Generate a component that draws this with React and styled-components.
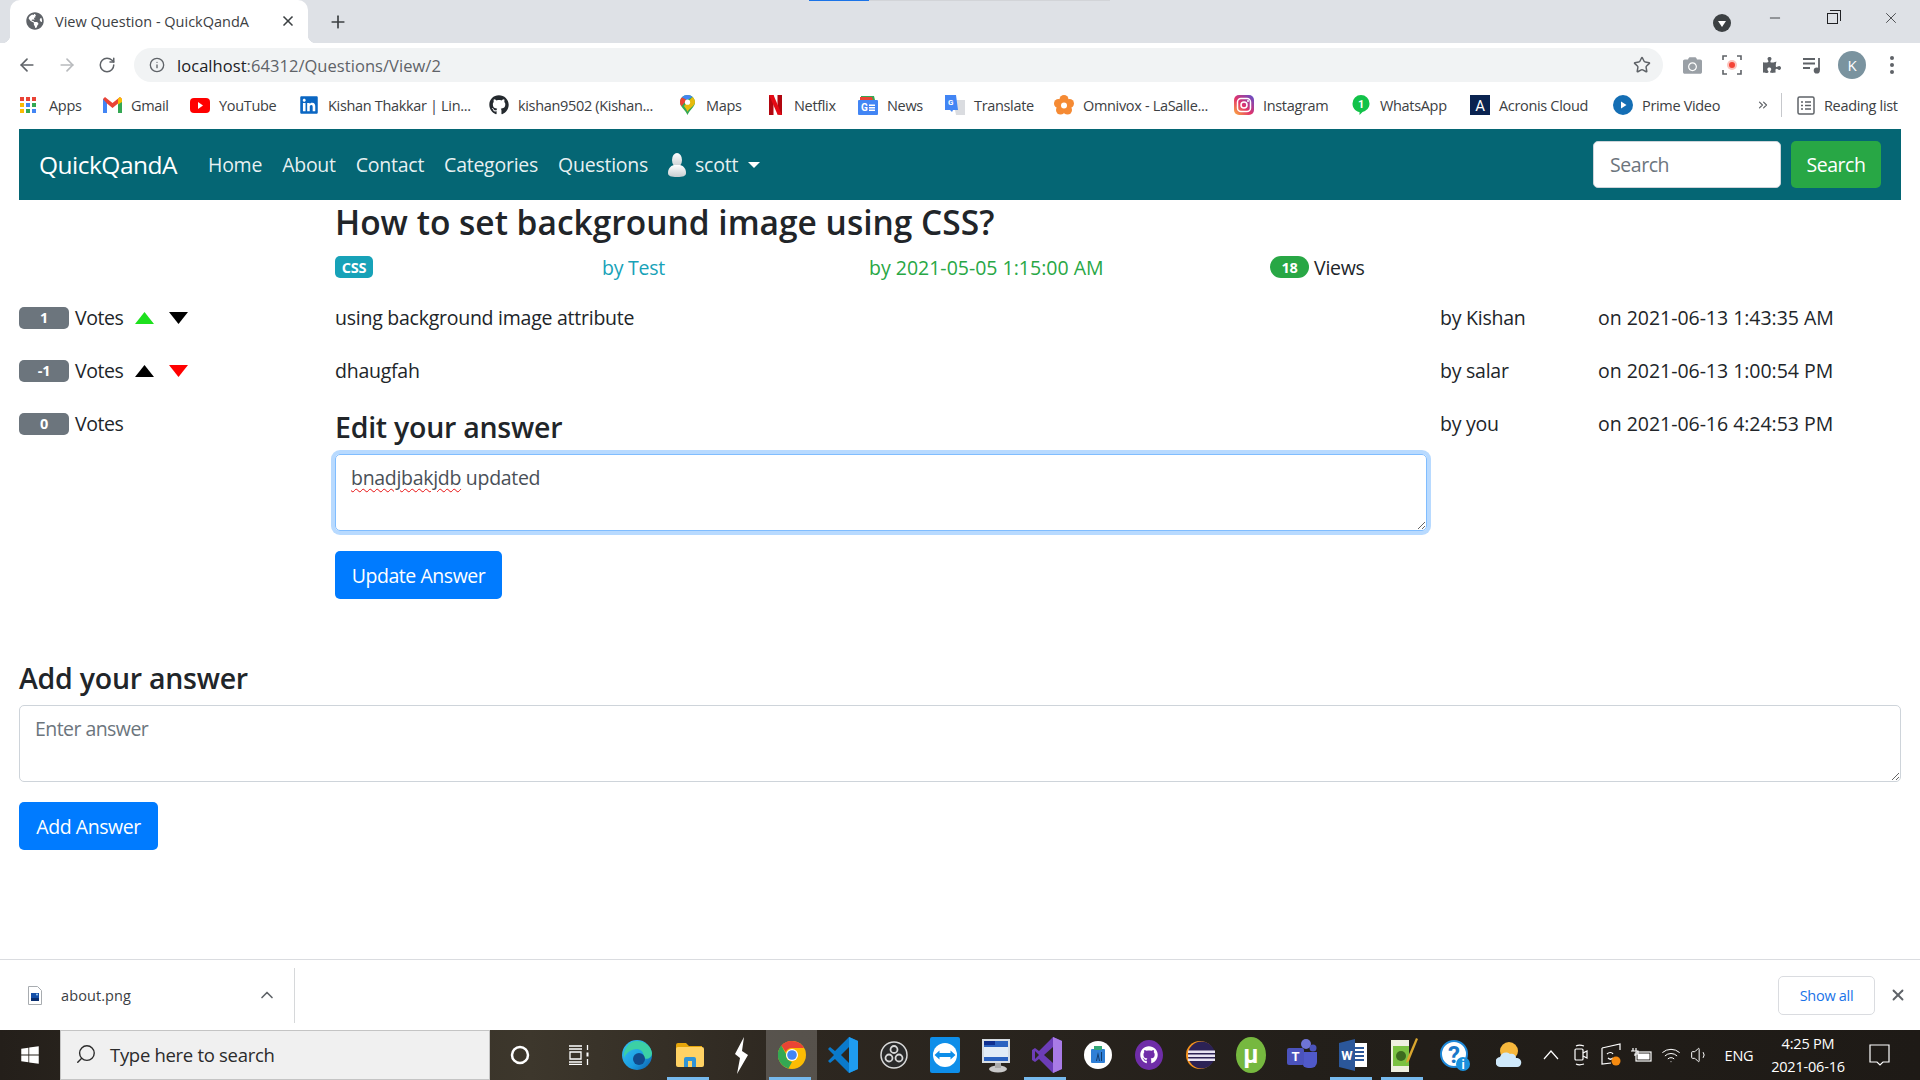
import React from 'react'
import styled, { createGlobalStyle, css } from 'styled-components'
import {
  ArrowLeft,
  ArrowRight,
  RotateCw,
  Info,
  Star,
  Plus,
  X,
  Minus,
  ChevronUp,
  Search,
  Volume1,
  Wifi,
  ChevronsRight
} from 'lucide-react'
import { FaGithub, FaGlobeAmericas, FaLinkedin, FaWindows, FaCamera, FaPuzzlePiece } from 'react-icons/fa'

const sans = `"Open Sans", "Noto Sans", sans-serif`

const GlobalStyle = createGlobalStyle`
  html, body {
    margin: 0;
    padding: 0;
    background: #fff;
  }
  * {
    box-sizing: border-box;
  }
  body {
    font-family: ${sans};
    color: #212529;
  }
`

const Window = styled.div`
  width: 1920px;
  height: 1080px;
  display: flex;
  flex-direction: column;
  overflow: hidden;
`

/* browser chrome */
const TabStrip = styled.div`
  position: relative;
  height: 43px;
  flex: none;
  background: #dee1e6;
  display: flex;
  align-items: flex-end;
  padding-left: 10px;
`

const LoadBar = styled.div`
  position: absolute;
  top: 0;
  left: 809px;
  width: 301px;
  height: 1px;
  background: linear-gradient(90deg, #1a73e8 60px, #d2d4d8 60px);
`

const Tab = styled.div`
  position: relative;
  width: 298px;
  height: 43px;
  padding: 0 12px 1px 16px;
  background: #fff;
  border-radius: 10px 10px 0 0;
  display: flex;
  align-items: center;
  font-size: 14.5px;
  color: #3c4043;
  &::before,
  &::after {
    content: '';
    position: absolute;
    bottom: 0;
    width: 8px;
    height: 8px;
  }
  &::before {
    left: -8px;
    background: radial-gradient(circle at 0 0, #dee1e6 8px, #fff 8.5px);
  }
  &::after {
    right: -8px;
    background: radial-gradient(circle at 100% 0, #dee1e6 8px, #fff 8.5px);
  }
`

const TabTitle = styled.span`
  flex: 1;
  margin-left: 11px;
  white-space: nowrap;
`

const NewTab = styled.div`
  margin-left: 20px;
  height: 43px;
  display: flex;
  align-items: center;
  color: #3c4043;
`

const WindowControls = styled.div`
  margin-left: auto;
  height: 43px;
  display: flex;
  align-items: center;
  color: #202124;
`

const ProfileDot = styled.div`
  width: 18px;
  height: 18px;
  margin: 2px 15px 0 0;
  border-radius: 50%;
  background: #3c4043;
  display: flex;
  align-items: center;
  justify-content: center;
  &::after {
    content: '';
    width: 0;
    height: 0;
    margin-top: 2px;
    border-left: 4px solid transparent;
    border-right: 4px solid transparent;
    border-top: 6px solid #fff;
  }
`

const ControlSlot = styled.div`
  width: 58px;
  height: 30px;
  display: flex;
  align-items: center;
  justify-content: center;
  margin-bottom: 8px;
`

const RestoreIcon = styled.div`
  position: relative;
  width: 11px;
  height: 11px;
  margin: 2px 2px 0 0;
  border: 1px solid #202124;
  &::before {
    content: '';
    position: absolute;
    top: -4px;
    left: 2px;
    width: 10px;
    height: 10px;
    border-top: 1px solid #202124;
    border-right: 1px solid #202124;
  }
`

const Toolbar = styled.div`
  height: 40px;
  flex: none;
  display: flex;
  align-items: center;
  padding-top: 4px;
  background: #fff;
  color: #5f6368;
`

const ToolSlot = styled.div`
  width: ${p => p.$w || 40}px;
  flex: none;
  display: flex;
  align-items: center;
  justify-content: center;
  color: ${p => p.$color || '#5f6368'};
`

const Omnibox = styled.div`
  width: 1529px;
  height: 34px;
  margin: 0 9px 0 0;
  border-radius: 17px;
  background: #f1f3f4;
  display: flex;
  align-items: center;
  padding: 0 12px 0 15px;
  font-size: 16.5px;
  letter-spacing: 0.05px;
  color: #5f6368;
  gap: 12px;
`

const Url = styled.span`
  flex: 1;
  b {
    font-weight: 400;
    color: #202124;
  }
`

const Avatar = styled.div`
  width: 28px;
  height: 28px;
  border-radius: 50%;
  background: #7a939f;
  color: #fff;
  font-size: 15px;
  display: flex;
  align-items: center;
  justify-content: center;
`

const BookmarkBar = styled.div`
  height: 46px;
  flex: none;
  background: #fff;
  display: flex;
  align-items: center;
  padding: 0 0 2px 20px;
  font-size: 14.5px;
  letter-spacing: -0.33px;
  color: #3c4043;
`

const Bookmark = styled.div`
  width: ${p => p.$w}px;
  flex: none;
  display: flex;
  align-items: center;
  gap: 9px;
  white-space: nowrap;
`

const IconBox = styled.span`
  width: 20px;
  height: 20px;
  flex: none;
  display: flex;
  align-items: center;
  justify-content: ${p => (p.$start ? 'flex-start' : 'center')};
`

const BarDivider = styled.div`
  width: 1px;
  height: 24px;
  background: #c6c8cc;
  margin: 0 15px 0 0;
`

const Overflow = styled.div`
  width: 25px;
  margin-left: -4px;
  display: flex;
  color: #5f6368;
`

/* page */
const Page = styled.main`
  flex: 1;
  min-height: 0;
  padding: 0 19px;
`

const Nav = styled.nav`
  height: 71px;
  background: #056674;
  display: flex;
  align-items: center;
  padding: 0 20px;
  color: #fff;
`

const Brand = styled.a`
  width: 140px;
  margin-right: 19px;
  font-size: 24.5px;
  letter-spacing: -0.5px;
  white-space: nowrap;
`

const NavLink = styled.a`
  padding: 0 10px;
  font-size: 19.5px;
  letter-spacing: -0.25px;
  color: rgba(255, 255, 255, 0.92);
  white-space: nowrap;
  display: flex;
  align-items: center;
`

const NavUser = styled.span`
  margin-left: 9px;
`

const Caret = styled.span`
  width: 0;
  height: 0;
  margin-left: 10px;
  border-left: 6px solid transparent;
  border-right: 6px solid transparent;
  border-top: 6px solid #fff;
`

const SearchForm = styled.form`
  margin: 0 0 0 auto;
  display: flex;
  gap: 10px;
`

const SearchInput = styled.input`
  width: 188px;
  height: 47px;
  padding: 0 16px;
  border: 1px solid #ced4da;
  border-radius: 5px;
  font: 400 19.5px ${sans};
  letter-spacing: -0.45px;
  &::placeholder {
    color: #6c757d;
    opacity: 1;
  }
`

const buttonBase = css`
  height: 48px;
  border: 0;
  border-radius: 5px;
  color: #fff;
  font: 400 19.5px ${sans};
  letter-spacing: -0.45px;
  text-align: center;
  padding: 0;
`

const SearchButton = styled.button`
  ${buttonBase};
  width: 90px;
  height: 47px;
  background: #28a745;
`

const PrimaryButton = styled.button`
  ${buttonBase};
  display: block;
  width: ${p => p.$w}px;
  background: #007bff;
  margin-top: 20px;
`

const Question = styled.section`
  padding-left: 316px;
`

const Title = styled.h1`
  margin: 0;
  height: 42px;
  padding-top: 1px;
  font-size: 33.5px;
  line-height: 42px;
  font-weight: 600;
  letter-spacing: 0;
  white-space: nowrap;
`

const MetaRow = styled.div`
  margin-top: 10px;
  height: 30px;
  display: grid;
  grid-template-columns: 267px 267px 401px 1fr;
  align-items: center;
  font-size: 19.5px;
  letter-spacing: -0.25px;
`

const MetaCell = styled.div`
  color: ${p => p.$color || '#212529'};
  display: flex;
  align-items: center;
  white-space: nowrap;
  letter-spacing: ${p => (p.$wide ? '0' : 'inherit')};
`

const ViewsLabel = styled.span`
  margin-left: 5px;
`

const Badge = styled.span`
  display: inline-flex;
  align-items: center;
  justify-content: center;
  width: ${p => p.$w}px;
  height: 22px;
  border-radius: ${p => (p.$pill ? '11px' : '5px')};
  background: ${p => p.$bg};
  color: #fff;
  font-size: 14.5px;
  font-weight: 700;
  letter-spacing: -0.3px;
  flex: none;
`

const Answers = styled.div`
  margin-top: 21px;
  display: flex;
  flex-direction: column;
  gap: 23px;
`

const AnswerRow = styled.div`
  display: grid;
  grid-template-columns: 316px 1105px 158px 1fr;
  font-size: 19.5px;
  line-height: 30px;
  letter-spacing: -0.25px;
  white-space: nowrap;
`

const DateCell = styled.div`
  letter-spacing: -0.03px;
`

const Votes = styled.div`
  height: 30px;
  display: flex;
  align-items: center;
`

const VoteLabel = styled.span`
  margin-left: 6px;
  width: 60px;
  letter-spacing: -0.45px;
`

const Arrow = styled.span`
  width: 19px;
  height: 12px;
  margin-right: 15px;
  background: ${p => p.$color};
  clip-path: ${p => (p.$down ? 'polygon(0 0, 100% 0, 50% 100%)' : 'polygon(50% 0, 100% 100%, 0 100%)')};
`

const EditForm = styled.div`
  width: 1092px;
`

const SubHeading = styled.h2`
  margin: 0;
  height: 36px;
  font-size: 28.5px;
  line-height: 36px;
  font-weight: 600;
  letter-spacing: -0.25px;
  white-space: nowrap;
`

const fieldBase = css`
  display: block;
  width: 100%;
  height: 77px;
  margin: 9px 0 0;
  padding: 8px 15px;
  border-radius: 5px;
  font: 400 19.5px/30px ${sans};
  letter-spacing: -0.3px;
  color: #495057;
  overflow: auto;
  resize: vertical;
  white-space: nowrap;
`

const FocusedField = styled.div`
  ${fieldBase};
  border: 1px solid #80bdff;
  box-shadow: 0 0 0 4px #b8daff;
`

const Misspelt = styled.span`
  text-decoration: underline wavy #e81010 1px;
  text-underline-offset: 3px;
`

const PlainField = styled.textarea`
  ${fieldBase};
  letter-spacing: -0.55px;
  border: 1px solid #ced4da;
  &::placeholder {
    color: #6c757d;
    opacity: 1;
  }
`

const AddSection = styled.section`
  margin-top: 61px;
`

/* download shelf */
const Shelf = styled.div`
  height: 71px;
  flex: none;
  border-top: 1px solid #dadce0;
  background: #fff;
  display: flex;
  align-items: center;
  font-size: 14.5px;
  letter-spacing: 0.1px;
  color: #3c4043;
`

const ShelfItem = styled.div`
  width: 295px;
  height: 55px;
  border-right: 1px solid #d6d8da;
  display: flex;
  align-items: center;
  padding: 0 17px 0 28px;
`

const FileName = styled.span`
  flex: 1;
  margin-left: 19px;
`

const ShowAll = styled.button`
  margin-left: auto;
  width: 97px;
  height: 39px;
  border: 1px solid #dadce0;
  border-radius: 5px;
  background: #fff;
  color: #1a73e8;
  font: 400 14.5px ${sans};
  letter-spacing: -0.3px;
  padding: 0;
`

const ShelfClose = styled.div`
  width: 45px;
  display: flex;
  justify-content: center;
  color: #5f6368;
`

/* taskbar */
const Taskbar = styled.footer`
  height: 50px;
  flex: none;
  display: flex;
  color: #fff;
  background: linear-gradient(90deg, #241f1a 0, #3d372c 530px, #2d2720 800px, #231f1a 1300px, #1e1a16 100%);
`

const StartButton = styled.div`
  width: 60px;
  display: flex;
  align-items: center;
  justify-content: center;
`

const SearchBox = styled.div`
  width: 430px;
  background: #f0f0f0;
  border: 1px solid #c4c4c4;
  display: flex;
  align-items: center;
  padding: 0 0 2px 14px;
  color: #2b2b2b;
  font-size: 18.5px;
  letter-spacing: -0.3px;
  gap: 13px;
`

const SearchGlass = styled(Search)`
  transform: scaleX(-1);
`

const TaskSlot = styled.div`
  position: relative;
  width: ${p => p.$w || 51}px;
  flex: none;
  display: flex;
  align-items: center;
  justify-content: center;
  background: ${p => (p.$active ? 'rgba(255,255,255,0.2)' : 'transparent')};
  &::after {
    content: '';
    display: ${p => (p.$open ? 'block' : 'none')};
    position: absolute;
    left: 3px;
    right: 6px;
    bottom: 0;
    height: 3px;
    background: #76b9ed;
  }
`

const TrayText = styled.div`
  width: ${p => p.$w}px;
  flex: none;
  display: flex;
  flex-direction: column;
  align-items: center;
  justify-content: center;
  font-size: 14.5px;
  letter-spacing: -0.2px;
  line-height: 23px;
  white-space: nowrap;
`

/* drawn icons */
const AppsIcon = () => (
  <svg width="16" height="16" viewBox="0 0 16 16">
    {['#ea4335', '#ea4335', '#ea4335', '#fbbc04', '#4285f4', '#34a853', '#fbbc04', '#34a853', '#4285f4'].map((c, i) => (
      <rect key={i} x={(i % 3) * 6} y={Math.floor(i / 3) * 6} width="4" height="4" fill={c} />
    ))}
  </svg>
)

const GmailIcon = () => (
  <svg width="19" height="16" viewBox="0 0 19 16">
    <path d="M0 2l2-2 7.500 6L17 0l2 2v14h-4V6.500L9.500 11 4 6.500V16H0z" fill="#ea4335" />
    <path d="M0 2v14h4V6.500z" fill="#4285f4" />
    <path d="M19 2v14h-4V6.500z" fill="#34a853" />
    <path d="M15 1.600L17 0l2 2v3l-4 2.500z" fill="#fbbc04" />
  </svg>
)

const YoutubeIcon = () => (
  <svg width="20" height="15" viewBox="0 0 20 15">
    <rect width="20" height="15" rx="4" fill="#f00" />
    <path d="M8 4l5 3.500L8 11z" fill="#fff" />
  </svg>
)

const MapsIcon = () => (
  <svg width="15" height="20" viewBox="0 0 15 20">
    <path d="M7.500 0C3.300 0 0 3.200 0 7.200 0 12 5.500 15 7.500 20c2-5 7.500-8 7.500-12.800C15 3.200 11.700 0 7.500 0z" fill="#34a853" />
    <path d="M2 2.200C.7 3.500 0 5.200 0 7.200c0 1.500.6 2.800 1.400 4L7 5z" fill="#ea4335" />
    <path d="M7.500 0c-2.200 0-4.100.8-5.500 2.200L7 5l5.500-3C11.200.8 9.500 0 7.500 0z" fill="#4285f4" />
    <path d="M12.500 2L4 11c1.300 1.900 2.700 3.700 3.500 5.800C9 13 15 11 15 7.200c0-2-1-3.900-2.500-5.200z" fill="#fbbc04" opacity="0.9" />
    <circle cx="7.500" cy="7.200" r="2.600" fill="#fff" />
  </svg>
)

const NetflixIcon = () => (
  <svg width="13" height="20" viewBox="0 0 13 20">
    <path d="M0 0h4.500v20L0 20z" fill="#b1060f" />
    <path d="M8.500 0H13v20l-4.500-.5z" fill="#b1060f" />
    <path d="M0 0h4.500L13 20l-4.500-.5z" fill="#e50914" />
  </svg>
)

const NewsIcon = () => (
  <svg width="20" height="20" viewBox="0 0 20 20">
    <path d="M3 1h13l1 4H3z" fill="#34a853" />
    <path d="M2 2h12l1 3H2z" fill="#ea4335" />
    <rect y="5" width="20" height="15" rx="1" fill="#4285f4" />
    <text x="3" y="16" fontSize="10" fontWeight="700" fontFamily="Roboto, sans-serif" fill="#fff">G</text>
    <path d="M11 9.500h6v1.500h-6zM11 12h6v1.500h-6zM11 14.500h6V16h-6z" fill="#fff" />
  </svg>
)

const TranslateIcon = () => (
  <svg width="20" height="20" viewBox="0 0 20 20">
    <path d="M8 5h12v15H11z" fill="#dadce0" />
    <path d="M0 0h11l2 15H8l-1 2-2-2H0z" fill="#4285f4" />
    <text x="3" y="10" fontSize="8" fontWeight="700" fontFamily="Roboto, sans-serif" fill="#fff">G</text>
  </svg>
)

const FlowerIcon = () => (
  <svg width="20" height="20" viewBox="0 0 20 20">
    {[[10, 4.500], [15.500, 8.500], [13.500, 15], [6.500, 15], [4.500, 8.500]].map(([x, y], i) => (
      <circle key={i} cx={x} cy={y} r="4.500" fill="#f58a33" />
    ))}
    <circle cx="10" cy="10.500" r="3" fill="#fff" />
  </svg>
)

const InstagramIcon = () => (
  <svg width="20" height="20" viewBox="0 0 20 20">
    <defs>
      <linearGradient id="ig" x1="0" y1="1" x2="1" y2="0">
        <stop offset="0" stopColor="#fdb13c" />
        <stop offset="0.45" stopColor="#e2336b" />
        <stop offset="1" stopColor="#5a4fcf" />
      </linearGradient>
    </defs>
    <rect width="20" height="20" rx="5" fill="url(#ig)" />
    <rect x="3.500" y="3.500" width="13" height="13" rx="3.500" fill="none" stroke="#fff" strokeWidth="1.500" />
    <circle cx="10" cy="10" r="3" fill="none" stroke="#fff" strokeWidth="1.500" />
    <circle cx="14" cy="6" r="1" fill="#fff" />
  </svg>
)

const WhatsappIcon = () => (
  <svg width="18" height="20" viewBox="0 0 18 20">
    <path d="M9 0a8.500 8.500 0 018.500 8.500c0 4.700-3.500 7.500-7 8.500l-3 3v-3C3.500 16.500.5 13 .5 8.500A8.500 8.500 0 019 0z" fill="#12c249" />
    <text x="6" y="13" fontSize="11" fontWeight="700" fontFamily="Roboto, sans-serif" fill="#fff">1</text>
  </svg>
)

const AcronisIcon = () => (
  <svg width="20" height="20" viewBox="0 0 20 20">
    <rect width="20" height="20" fill="#0a2350" />
    <text x="10" y="16" textAnchor="middle" fontSize="15" fontFamily="Roboto, sans-serif" fill="#fff">A</text>
  </svg>
)

const PrimeIcon = () => (
  <svg width="20" height="20" viewBox="0 0 20 20">
    <circle cx="10" cy="10" r="10" fill="#146eb4" />
    <path d="M8 6.500l5.500 3.500L8 13.500z" fill="#fff" />
  </svg>
)

const ReadingIcon = () => (
  <svg width="18" height="19" viewBox="0 0 18 19" fill="none" stroke="#5f6368" strokeWidth="1.500">
    <rect x="1" y="1" width="16" height="17" rx="1.500" />
    <path d="M4 6h2M8 6h6M4 9.500h2M8 9.500h6M4 13h2M8 13h6" />
  </svg>
)

const RecordIcon = () => (
  <svg width="20" height="20" viewBox="0 0 20 20" fill="none">
    <path d="M1 5V1h4M15 1h4v4M19 15v4h-4M5 19H1v-4" stroke="#5f6368" strokeWidth="1.600" />
    <circle cx="10" cy="10" r="5" fill="#fbc4bd" />
    <circle cx="10" cy="10" r="3" fill="#f44336" />
  </svg>
)

const MediaIcon = () => (
  <svg width="19" height="17" viewBox="0 0 19 17" fill="none" stroke="#5f6368" strokeWidth="1.800">
    <path d="M0 2h12M0 6.500h12M0 11h7" />
    <path d="M16 1v12" />
    <circle cx="13.800" cy="13.500" r="2.200" fill="#5f6368" />
  </svg>
)

const DotsIcon = () => (
  <svg width="4" height="18" viewBox="0 0 4 18" fill="#5f6368">
    <circle cx="2" cy="2" r="2" />
    <circle cx="2" cy="9" r="2" />
    <circle cx="2" cy="16" r="2" />
  </svg>
)

const UserIcon = () => (
  <svg width="18" height="24" viewBox="0 0 18 24">
    <defs>
      <linearGradient id="usr" x1="0" y1="0" x2="0" y2="1">
        <stop offset="0" stopColor="#fff" />
        <stop offset="1" stopColor="#c9cdd0" />
      </linearGradient>
    </defs>
    <ellipse cx="9" cy="7" rx="5" ry="7" fill="url(#usr)" />
    <path d="M6 12h6c4 1 6 4 6 8 0 3-3 4-9 4s-9-1-9-4c0-4 2-7 6-8z" fill="url(#usr)" />
  </svg>
)

const FileIcon = () => (
  <svg width="14" height="19" viewBox="0 0 14 19">
    <path d="M.5.500h9l4 4v14H.5z" fill="#fff" stroke="#a8acb0" />
    <rect x="3" y="7" width="8" height="8" fill="#1550a8" />
    <rect x="3" y="12" width="8" height="3" fill="#0a2f70" />
    <circle cx="9" cy="8.500" r="1" fill="#9fd0f5" />
  </svg>
)

const TaskViewIcon = () => (
  <svg width="20" height="20" viewBox="0 0 20 20" fill="none" stroke="#fff" strokeWidth="1.300">
    <path d="M0 1h13M0 4h13M1 7h11v7H1zM0 17h13M0 19.500h13" />
    <path d="M18.500 0v5M18.500 14v6" />
    <rect x="17.500" y="7.500" width="2" height="4" fill="#fff" stroke="none" />
  </svg>
)

const EdgeIcon = () => (
  <svg width="30" height="30" viewBox="0 0 30 30">
    <defs>
      <linearGradient id="edg" x1="0" y1="0" x2="1" y2="1">
        <stop offset="0" stopColor="#35c1f1" />
        <stop offset="0.6" stopColor="#1b9de2" />
        <stop offset="1" stopColor="#0c59a4" />
      </linearGradient>
    </defs>
    <circle cx="15" cy="15" r="15" fill="url(#edg)" />
    <path d="M15 1c8 0 14 5 15 12 0 5-5 7-9 5 2-5-2-9-6-9C9 9 4 13 2 18 1 9 7 1 15 1z" fill="#3cd0a5" />
    <circle cx="17" cy="19" r="6" fill="#114a8b" />
  </svg>
)

const FolderIcon = () => (
  <svg width="28" height="26" viewBox="0 0 28 26">
    <path d="M0 3a2 2 0 012-2h8l3 3h13v4H0z" fill="#e5a50a" />
    <rect y="5" width="28" height="20" rx="2" fill="#ffd264" />
    <path d="M8 25v-8a2 2 0 012-2h8a2 2 0 012 2v8h-4v-6h-4v6z" fill="#2f93d6" />
  </svg>
)

const BoltIcon = () => (
  <svg width="14" height="37" viewBox="0 0 14 37">
    <path d="M10 0L1 17l5 4-3 16 11-19-6-4z" fill="#fff" />
  </svg>
)

const ChromeIcon = () => (
  <svg width="28" height="28" viewBox="0 0 28 28">
    <circle cx="14" cy="14" r="14" fill="#fbbc04" />
    <path d="M14 0a14 14 0 0112.100 7H14a7 7 0 00-6.300 4L3.300 4.600A14 14 0 0114 0z" fill="#ea4335" />
    <path d="M3.300 4.600L8 13a7 7 0 006 8l-3.500 6.500A14 14 0 013.300 4.600z" fill="#34a853" />
    <circle cx="14" cy="14" r="6" fill="#fff" />
    <circle cx="14" cy="14" r="4.800" fill="#4285f4" />
  </svg>
)

const VsCodeIcon = () => (
  <svg width="30" height="36" viewBox="0 0 30 36">
    <path d="M21 0l9 4v28l-9 4L7 22l-5 4-2-2 6-6-6-6 2-2 5 4z" fill="#0a7acc" />
    <path d="M21 0l9 4v28l-9 4z" fill="#1f9cf0" />
    <path d="M21 10v16l-8-8z" fill="#2b2620" />
  </svg>
)

const ObsIcon = () => (
  <svg width="28" height="28" viewBox="0 0 28 28">
    <circle cx="14" cy="14" r="13" fill="#2a2a2a" stroke="#d8d8d8" strokeWidth="1.500" />
    <circle cx="14" cy="8.500" r="3.500" fill="none" stroke="#d8d8d8" strokeWidth="1.800" />
    <circle cx="9" cy="17" r="3.500" fill="none" stroke="#d8d8d8" strokeWidth="1.800" />
    <circle cx="19" cy="17" r="3.500" fill="none" stroke="#d8d8d8" strokeWidth="1.800" />
  </svg>
)

const TeamViewerIcon = () => (
  <svg width="30" height="36" viewBox="0 0 30 36">
    <rect width="30" height="36" rx="2" fill="#0e8ee9" />
    <circle cx="15" cy="18" r="12" fill="#fff" />
    <path d="M4.500 18l5-4.500V16h11v-2.500l5 4.500-5 4.500V20h-11v2.500z" fill="#0e8ee9" />
  </svg>
)

const KeyboardIcon = () => (
  <svg width="30" height="36" viewBox="0 0 30 36">
    <ellipse cx="17" cy="32" rx="9" ry="3.500" fill="#c9c9c9" />
    <rect x="14" y="24" width="6" height="7" fill="#a9a9a9" />
    <rect x="1" y="2" width="28" height="24" fill="#d7dde3" />
    <rect x="3" y="4" width="24" height="20" fill="#2b62c0" />
    <rect x="3" y="10" width="24" height="10" fill="#e2ecf7" />
    <rect x="3" y="4" width="11" height="4" fill="#0f2f90" />
  </svg>
)

const VisualStudioIcon = () => (
  <svg width="30" height="36" viewBox="0 0 30 36">
    <path d="M21 0l9 4v28l-9 4L7 22l-4 3-3-2V13l3-2 4 3z" fill="#6c3db8" />
    <path d="M21 0l9 4v28l-9 4z" fill="#a97be6" />
    <path d="M21 10v16l-9-8zM3 14l4 4-4 4z" fill="#2b2620" />
  </svg>
)

const ReaderIcon = () => (
  <svg width="28" height="28" viewBox="0 0 28 28">
    <circle cx="14" cy="14" r="14" fill="#fff" />
    <rect x="7" y="8" width="14" height="14" rx="1" fill="#2f7fd6" />
    <rect x="10" y="5" width="8" height="4" fill="#34a877" />
    <path d="M12 20l2-9 2 9h-1l-1-5-1 5zM17 11h1v9h-1z" fill="#123a6b" />
  </svg>
)

const GithubDesktopIcon = () => (
  <svg width="28" height="30" viewBox="0 0 28 30">
    <ellipse cx="14" cy="15" rx="14" ry="15" fill="#6f2da8" />
    <g transform="translate(5 6)">
      <FaGithub size={18} color="#fff" />
    </g>
  </svg>
)

const EclipseIcon = () => (
  <svg width="30" height="30" viewBox="0 0 30 30">
    <circle cx="15" cy="15" r="14" fill="#f7941e" />
    <circle cx="16.500" cy="15" r="13.500" fill="#2c2255" />
    <path d="M3 10.500h27v2.500H3zM3 14.500h27V17H3zM3 18.500h27V21H3z" fill="#e8e4f4" />
  </svg>
)

const TorrentIcon = () => (
  <svg width="30" height="36" viewBox="0 0 30 36">
    <ellipse cx="15" cy="18" rx="15" ry="18" fill="#76b83f" />
    <text x="15" y="26" textAnchor="middle" fontSize="25" fontWeight="700" fontFamily="Roboto, sans-serif" fill="#fff">µ</text>
  </svg>
)

const TeamsIcon = () => (
  <svg width="30" height="32" viewBox="0 0 30 32">
    <circle cx="19" cy="5" r="5" fill="#6f74d6" />
    <circle cx="26" cy="9" r="3.500" fill="#4b53bc" />
    <path d="M15 13h15v10a6 6 0 01-6 6h-3a6 6 0 01-6-6z" fill="#5059c9" />
    <rect y="9" width="17" height="17" rx="2" fill="#4b53bc" />
    <text x="8.500" y="22" textAnchor="middle" fontSize="13" fontWeight="700" fontFamily="Roboto, sans-serif" fill="#fff">T</text>
  </svg>
)

const WordIcon = () => (
  <svg width="28" height="32" viewBox="0 0 28 32">
    <rect x="11" y="4" width="17" height="24" fill="#fff" />
    <path d="M14 9h11M14 13h11M14 17h11M14 21h11" stroke="#2b579a" strokeWidth="2" />
    <path d="M0 4l16-4v32L0 28z" fill="#2b579a" />
    <text x="8" y="21" textAnchor="middle" fontSize="13" fontWeight="700" fontFamily="Roboto, sans-serif" fill="#fff">W</text>
  </svg>
)

const NotepadIcon = () => (
  <svg width="28" height="34" viewBox="0 0 28 34">
    <path d="M1 2h18v32H1z" fill="#f0f0e0" />
    <rect x="3" y="8" width="16" height="20" fill="#7cc242" />
    <circle cx="11" cy="18" r="5" fill="#3d6b1f" />
    <path d="M26 0l2 1-9 22-3 2 1-4z" fill="#d9a62e" />
  </svg>
)

const HelpIcon = () => (
  <svg width="30" height="32" viewBox="0 0 30 32">
    <circle cx="14" cy="15" r="13" fill="#fff" stroke="#1e88d8" strokeWidth="2" />
    <text x="14" y="24" textAnchor="middle" fontSize="24" fontWeight="700" fontFamily="Roboto, sans-serif" fill="#1a78c8">?</text>
    <circle cx="23" cy="25" r="7" fill="#1a90dc" />
    <text x="23" y="30" textAnchor="middle" fontSize="12" fontWeight="700" fontFamily="Roboto, sans-serif" fill="#fff">i</text>
  </svg>
)

const WeatherIcon = () => (
  <svg width="26" height="26" viewBox="0 0 26 26">
    <circle cx="13" cy="9" r="9" fill="#f6b73c" />
    <path d="M5 25a5 5 0 01-1-10c1-4 6-6 10-3 3-1 6 1 6 4 4 0 6 3 5 6s-3 3-5 3z" fill="#cfe9fb" />
  </svg>
)

const TrayCaret = () => (
  <svg width="16" height="10" viewBox="0 0 16 10" fill="none" stroke="#fff" strokeWidth="1.200">
    <path d="M1 9l7-8 7 8" />
  </svg>
)

const MeetIcon = () => (
  <svg width="14" height="22" viewBox="0 0 14 22" fill="none" stroke="#fff" strokeWidth="1.200">
    <rect x="1" y="5" width="8" height="11" rx="1" />
    <path d="M9 9l4-2v7l-4-2M2 2c2-1 5-1 8 0M2 20c2 1 5 1 8 0" />
  </svg>
)

const CastIcon = () => (
  <svg width="21" height="24" viewBox="0 0 21 24" fill="none" stroke="#fff" strokeWidth="1.200">
    <path d="M1 5l18-4v6M1 5v16l9-1" />
    <path d="M6 11c2-2 5-2 6 0M12 15c-2 2-4 1-5 0" />
    <circle cx="15" cy="18" r="4.500" fill="#f58a10" stroke="none" />
  </svg>
)

const BatteryIcon = () => (
  <svg width="21" height="14" viewBox="0 0 21 14" fill="none" stroke="#fff" strokeWidth="1.200">
    <path d="M2 0v3M5 0v3M0 3h7v3H4v2" />
    <rect x="5" y="4" width="15" height="9" />
    <rect x="6.500" y="5.500" width="12" height="6" fill="#fff" stroke="none" />
  </svg>
)

const NotifyIcon = () => (
  <svg width="21" height="23" viewBox="0 0 21 23" fill="none" stroke="#fff" strokeWidth="1.200">
    <path d="M1 1h19v17h-6l-3 3-3-3H1z" />
  </svg>
)

const bookmarks = [
  { w: 82, label: 'Apps', icon: <AppsIcon />, start: true },
  { w: 88, label: 'Gmail', icon: <GmailIcon /> },
  { w: 109, label: 'YouTube', icon: <YoutubeIcon /> },
  { w: 190, label: 'Kishan Thakkar | Lin...', icon: <FaLinkedin size={20} color="#0a66c2" /> },
  { w: 188, label: 'kishan9502 (Kishan...', icon: <FaGithub size={20} color="#24292e" /> },
  { w: 88, label: 'Maps', icon: <MapsIcon /> },
  { w: 93, label: 'Netflix', icon: <NetflixIcon /> },
  { w: 87, label: 'News', icon: <NewsIcon /> },
  { w: 109, label: 'Translate', icon: <TranslateIcon /> },
  { w: 180, label: 'Omnivox - LaSalle...', icon: <FlowerIcon /> },
  { w: 117, label: 'Instagram', icon: <InstagramIcon /> },
  { w: 119, label: 'WhatsApp', icon: <WhatsappIcon /> },
  { w: 143, label: 'Acronis Cloud', icon: <AcronisIcon /> },
  { w: 147, label: 'Prime Video', icon: <PrimeIcon /> }
]

const taskItems = [
  { w: 59, icon: <svg width="20" height="20" viewBox="0 0 20 20"><circle cx="10" cy="10" r="8" fill="none" stroke="#fff" strokeWidth="2.500" /></svg> },
  { w: 60, icon: <TaskViewIcon /> },
  { w: 55, icon: <EdgeIcon /> },
  { icon: <FolderIcon />, open: true },
  { icon: <BoltIcon /> },
  { icon: <ChromeIcon />, open: true, active: true },
  { icon: <VsCodeIcon /> },
  { icon: <ObsIcon /> },
  { icon: <TeamViewerIcon /> },
  { icon: <KeyboardIcon /> },
  { icon: <VisualStudioIcon />, open: true },
  { icon: <ReaderIcon /> },
  { icon: <GithubDesktopIcon /> },
  { icon: <EclipseIcon /> },
  { icon: <TorrentIcon /> },
  { icon: <TeamsIcon /> },
  { icon: <WordIcon />, open: true },
  { icon: <NotepadIcon />, open: true },
  { w: 52, icon: <HelpIcon /> },
  { w: 55, icon: <WeatherIcon /> },
  { w: 30, icon: <TrayCaret /> },
  { w: 30, icon: <MeetIcon /> },
  { w: 30, icon: <CastIcon /> },
  { w: 30, icon: <BatteryIcon /> },
  { w: 30, icon: <Wifi size={20} strokeWidth={1.2} /> },
  { w: 28, icon: <Volume1 size={20} strokeWidth={1.2} /> }
]

const answers = [
  { votes: '1', text: 'using background image attribute', by: 'by Kishan', on: 'on 2021-06-13 1:43:35 AM', up: '#1de01d', down: '#000' },
  { votes: '-1', text: 'dhaugfah', by: 'by salar', on: 'on 2021-06-13 1:00:54 PM', up: '#000', down: '#f00' }
]

const VoteCell = ({ votes, up, down }) => (
  <Votes>
    <Badge $w={50} $bg="#6c757d">{votes}</Badge>
    <VoteLabel>Votes</VoteLabel>
    {up && <Arrow $color={up} />}
    {down && <Arrow $color={down} $down />}
  </Votes>
)

const App = () => (
  <Window>
    <GlobalStyle />
    <TabStrip>
      <LoadBar />
      <Tab>
        <FaGlobeAmericas size={18} color="#5f6368" />
        <TabTitle>View Question - QuickQandA</TabTitle>
        <X size={16} strokeWidth={2.5} color="#3c4043" />
      </Tab>
      <NewTab>
        <Plus size={20} strokeWidth={2} />
      </NewTab>
      <WindowControls>
        <ProfileDot />
        <ControlSlot><Minus size={16} strokeWidth={1.2} /></ControlSlot>
        <ControlSlot><RestoreIcon /></ControlSlot>
        <ControlSlot><X size={18} strokeWidth={1} /></ControlSlot>
      </WindowControls>
    </TabStrip>
    <Toolbar>
      <ToolSlot $w={54}><ArrowLeft size={20} /></ToolSlot>
      <ToolSlot $w={26} $color="#b8babd"><ArrowRight size={20} /></ToolSlot>
      <ToolSlot $w={54}><RotateCw size={18} /></ToolSlot>
      <Omnibox>
        <Info size={16} />
        <Url><b>localhost</b>:64312/Questions/View/2</Url>
        <Star size={18} />
      </Omnibox>
      <ToolSlot $color="#9aa0a6"><FaCamera size={19} /></ToolSlot>
      <ToolSlot><RecordIcon /></ToolSlot>
      <ToolSlot><FaPuzzlePiece size={18} /></ToolSlot>
      <ToolSlot><MediaIcon /></ToolSlot>
      <ToolSlot><Avatar>K</Avatar></ToolSlot>
      <ToolSlot><DotsIcon /></ToolSlot>
    </Toolbar>
    <BookmarkBar>
      {bookmarks.map(b => (
        <Bookmark key={b.label} $w={b.w}>
          <IconBox $start={b.start}>{b.icon}</IconBox>
          {b.label}
        </Bookmark>
      ))}
      <Overflow><ChevronsRight size={14} /></Overflow>
      <BarDivider />
      <Bookmark $w={110}>
        <ReadingIcon />
        Reading list
      </Bookmark>
    </BookmarkBar>
    <Page>
      <Nav>
        <Brand>QuickQandA</Brand>
        <NavLink>Home</NavLink>
        <NavLink>About</NavLink>
        <NavLink>Contact</NavLink>
        <NavLink>Categories</NavLink>
        <NavLink>Questions</NavLink>
        <NavLink>
          <UserIcon />
          <NavUser>scott</NavUser>
          <Caret />
        </NavLink>
        <SearchForm>
          <SearchInput placeholder="Search" />
          <SearchButton type="button">Search</SearchButton>
        </SearchForm>
      </Nav>
      <Question>
        <Title>How to set background image using CSS?</Title>
        <MetaRow>
          <MetaCell><Badge $w={38} $bg="#17a2b8">CSS</Badge></MetaCell>
          <MetaCell $color="#17a2b8">by Test</MetaCell>
          <MetaCell $color="#28a745" $wide>by 2021-05-05 1:15:00 AM</MetaCell>
          <MetaCell>
            <Badge $w={39} $bg="#28a745" $pill>18</Badge>
            <ViewsLabel>Views</ViewsLabel>
          </MetaCell>
        </MetaRow>
      </Question>
      <Answers>
        {answers.map(a => (
          <AnswerRow key={a.by}>
            <VoteCell votes={a.votes} up={a.up} down={a.down} />
            <div>{a.text}</div>
            <div>{a.by}</div>
            <DateCell>{a.on}</DateCell>
          </AnswerRow>
        ))}
        <AnswerRow>
          <VoteCell votes="0" />
          <EditForm>
            <SubHeading>Edit your answer</SubHeading>
            <FocusedField>
              <Misspelt>bnadjbakjdb</Misspelt> updated
            </FocusedField>
            <PrimaryButton $w={167} type="button">Update Answer</PrimaryButton>
          </EditForm>
          <div>by you</div>
          <DateCell>on 2021-06-16 4:24:53 PM</DateCell>
        </AnswerRow>
      </Answers>
      <AddSection>
        <SubHeading>Add your answer</SubHeading>
        <PlainField placeholder="Enter answer" />
        <PrimaryButton $w={139} type="button">Add Answer</PrimaryButton>
      </AddSection>
    </Page>
    <Shelf>
      <ShelfItem>
        <FileIcon />
        <FileName>about.png</FileName>
        <ChevronUp size={20} color="#5f6368" />
      </ShelfItem>
      <ShowAll type="button">Show all</ShowAll>
      <ShelfClose><X size={18} strokeWidth={2.5} /></ShelfClose>
    </Shelf>
    <Taskbar>
      <StartButton><FaWindows size={20} /></StartButton>
      <SearchBox>
        <SearchGlass size={22} strokeWidth={1.5} />
        Type here to search
      </SearchBox>
      {taskItems.map((t, i) => (
        <TaskSlot key={i} $w={t.w} $open={t.open} $active={t.active}>{t.icon}</TaskSlot>
      ))}
      <TrayText $w={50}>ENG</TrayText>
      <TrayText $w={88}>
        <span>4:25 PM</span>
        <span>2021-06-16</span>
      </TrayText>
      <TaskSlot $w={54}><NotifyIcon /></TaskSlot>
    </Taskbar>
  </Window>
)

export default App
